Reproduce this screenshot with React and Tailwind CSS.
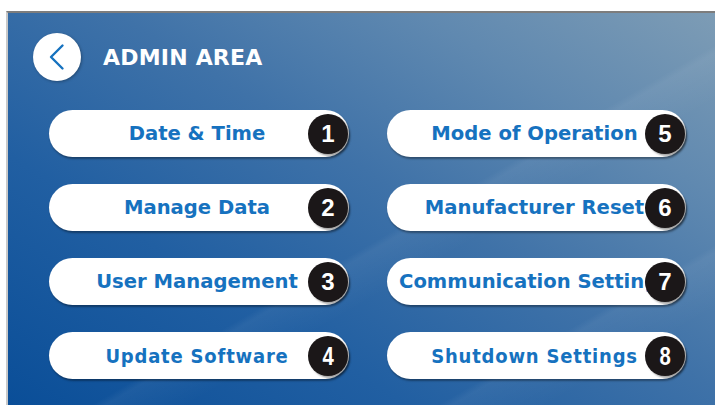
import React from "react";

const left = [
  { label: "Date & Time", n: "1" },
  { label: "Manage Data", n: "2" },
  { label: "User Management", n: "3" },
  { label: "Update Software", n: "4", cond: true },
];
const right = [
  { label: "Mode of Operation", n: "5" },
  { label: "Manufacturer Reset", n: "6" },
  { label: "Communication Settings", n: "7" },
  { label: "Shutdown Settings", n: "8", cond: true },
];

function Pill({ label, n, cond }) {
  return (
    <div className="relative h-[47px] rounded-full bg-white shadow-[1px_2px_2px_rgba(0,0,0,0.35)]">
      <div className="flex h-full items-center justify-center pr-[4px] whitespace-nowrap">
        <span
          className={
            "font-bold leading-none text-[#1672bf] " +
            (cond
              ? "text-[20px] tracking-[0.8px] font-['DejaVu_Sans_Condensed','DejaVu_Sans',sans-serif] font-stretch-condensed"
              : "text-[19.6px] font-['DejaVu_Sans',sans-serif]")
          }
        >
          {label}
        </span>
      </div>
      <div className="absolute right-[1px] top-1/2 flex h-[40px] w-[40px] -translate-y-1/2 items-center justify-center rounded-full bg-[#1b1718] shadow-[2px_2px_2px_rgba(0,0,0,0.35)]">
        <span
          className={
            "font-bold leading-none text-white font-['Liberation_Sans',Arial,sans-serif] " +
            (cond ? "inline-block text-[26px] scale-x-[0.78]" : "text-[24px]")
          }
        >
          {n}
        </span>
      </div>
    </div>
  );
}

export default function App() {
  return (
    <div className="h-[405px] w-[715px] overflow-hidden bg-white pl-[6px] pt-[11px]">
      <div className="h-full w-full border-l-2 border-t-2 border-l-[#c9c9c9] border-t-[#7d7d7d]">
        <div className="relative h-full w-full overflow-hidden bg-[linear-gradient(32deg,#0a4e98_0%,#215fa2_30%,#3f72a8_55%,#6089b0_78%,#7d9cb5_100%)]">
          <div className="pointer-events-none absolute inset-0 bg-[linear-gradient(150deg,transparent_0%,transparent_55%,rgba(255,255,255,0.05)_56%,transparent_62%,transparent_80%,rgba(255,255,255,0.05)_81%,transparent_88%)]" />
          <div className="relative flex items-center pl-[25px] pt-[20px]">
            <div className="flex h-[48px] w-[48px] items-center justify-center rounded-full bg-white shadow-[1px_1px_3px_rgba(0,0,0,0.3)]">
              <svg width="24" height="28" viewBox="0 0 24 28" fill="none">
                <path d="M17.5 2.5 L6 14 L17.5 25.5" stroke="#1672bf" strokeWidth="2.4" strokeLinecap="round" strokeLinejoin="round" />
              </svg>
            </div>
            <h1 className="ml-[22px] text-[22px] font-bold tracking-[0.2px] text-white font-['DejaVu_Sans',sans-serif]">
              ADMIN AREA
            </h1>
          </div>
          <div className="relative mt-[29px] grid grid-cols-[300px_299px] gap-x-[38px] gap-y-[27px] pl-[41px]">
            {left.map((l, i) => (
              <React.Fragment key={i}>
                <Pill {...l} />
                <Pill {...right[i]} />
              </React.Fragment>
            ))}
          </div>
        </div>
      </div>
    </div>
  );
}
